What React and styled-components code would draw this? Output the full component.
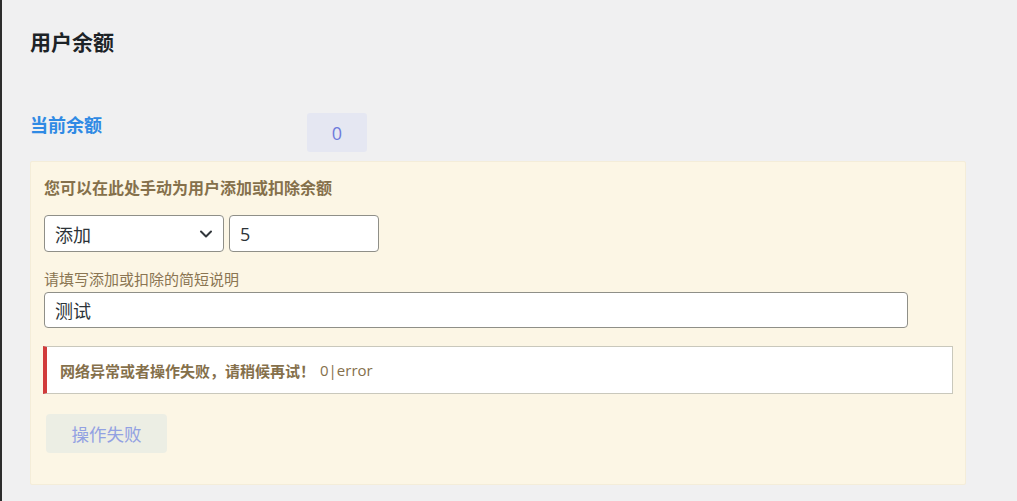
import React from 'react'
import styled, { createGlobalStyle } from 'styled-components'

const Global = createGlobalStyle`
  html, body {
    margin: 0;
    padding: 0;
    background: #f0f0f1;
  }
  body {
    font-family: "Open Sans", "Noto Sans CJK SC", sans-serif;
  }
`

const Page = styled.div`
  min-height: 501px;
  box-sizing: border-box;
  border-left: 2px solid #2c2c2c;
  padding: 29px 0 0 28px;
  background: #f0f0f1;
`

const Title = styled.h1`
  margin: 0;
  font-size: 21px;
  line-height: 27px;
  font-weight: 700;
  color: #1d2327;
`

const BalanceRow = styled.div`
  display: flex;
  align-items: flex-start;
  margin-top: 57px;
`

const BalanceLabel = styled.div`
  width: 277px;
  padding-top: 1px;
  font-size: 18px;
  line-height: 22px;
  font-weight: 700;
  color: #2f8ae4;
`

const Badge = styled.div`
  width: 60px;
  height: 39px;
  display: flex;
  align-items: center;
  justify-content: center;
  border-radius: 3px;
  background: #e5e7f2;
  color: #6f7bdc;
  font-size: 18px;
`

const Panel = styled.div`
  width: 936px;
  box-sizing: border-box;
  margin-top: 9px;
  padding: 16px 12px 31px 13px;
  background: #fcf6e5;
  border: 1px solid #f4edd9;
  border-radius: 2px;
`

const PanelHeading = styled.div`
  font-size: 16px;
  line-height: 20px;
  font-weight: 700;
  color: #85704b;
`

const FieldRow = styled.div`
  display: flex;
  gap: 5px;
  margin-top: 17px;
`

const Field = styled.div`
  box-sizing: border-box;
  width: ${({ $w }) => $w}px;
  height: ${({ $h }) => $h || 37}px;
  display: flex;
  align-items: center;
  justify-content: space-between;
  padding: 0 7px 0 10px;
  background: #fff;
  border: 1px solid #8f8f88;
  border-radius: 4px;
  font-size: 18px;
  color: #2c3338;
`

const Hint = styled.div`
  margin-top: 18px;
  font-size: 15px;
  line-height: 18px;
  color: #8a7552;
`

const NoteField = styled(Field)`
  margin-top: 4px;
`

const Notice = styled.div`
  box-sizing: border-box;
  width: 910px;
  height: 48px;
  margin: 18px 0 0 -1px;
  display: flex;
  align-items: center;
  gap: 5px;
  padding-left: 13px;
  background: #fff;
  border: 1px solid #c9c8bc;
  border-left: 4px solid #d13b3b;
  font-size: 15px;
  color: #85704b;
`

const NoticeStrong = styled.strong`
  font-weight: 700;
`

const Button = styled.div`
  width: 121px;
  height: 39px;
  margin: 20px 0 0 2px;
  display: flex;
  align-items: center;
  justify-content: center;
  border-radius: 4px;
  background: #eceee4;
  color: #92a1e2;
  font-size: 17.5px;
`

const Chevron = () => (
  <svg width="20" height="20" viewBox="0 0 24 24" fill="none" stroke="#32373c" strokeWidth="2.4" strokeLinecap="round" strokeLinejoin="round">
    <path d="m6 9 6 6 6-6" />
  </svg>
)

export default function App() {
  return (
    <Page>
      <Global />
      <Title>用户余额</Title>
      <BalanceRow>
        <BalanceLabel>当前余额</BalanceLabel>
        <Badge>0</Badge>
      </BalanceRow>
      <Panel>
        <PanelHeading>您可以在此处手动为用户添加或扣除余额</PanelHeading>
        <FieldRow>
          <Field $w={180}>
            <span>添加</span>
            <Chevron />
          </Field>
          <Field $w={150}>5</Field>
        </FieldRow>
        <Hint>请填写添加或扣除的简短说明</Hint>
        <NoteField $w={864} $h={36}>测试</NoteField>
        <Notice>
          <NoticeStrong>网络异常或者操作失败，请稍候再试！</NoticeStrong>
          <span>0|error</span>
        </Notice>
        <Button>操作失败</Button>
      </Panel>
    </Page>
  )
}
